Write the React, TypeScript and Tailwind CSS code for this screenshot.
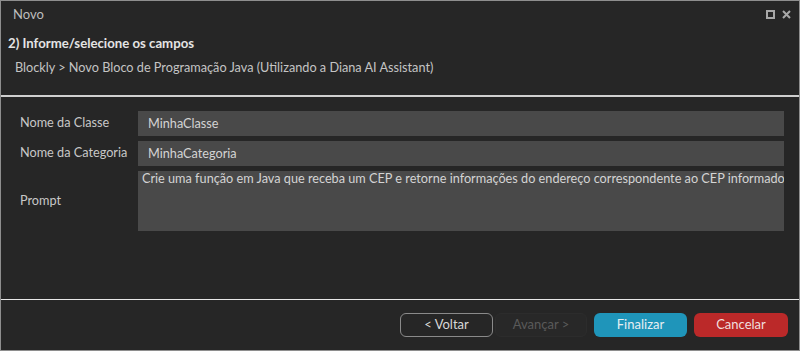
import React from "react";

const font = { fontFamily: "Lato, 'Noto Sans', sans-serif" };

export default function App() {
  return (
    <div
      className="w-[800px] h-[351px] border border-[#8e8e8e] bg-[#262626] flex flex-col text-[12.7px] text-[#cfcfcf] overflow-hidden"
      style={font}
    >
      {/* Title bar */}
      <div className="h-[27px] flex items-center justify-between pl-[12px] pr-[8px]">
        <span className="text-[13px] text-[#bdbdbd]">Novo</span>
        <div className="flex items-center gap-[7px]">
          <svg width="9" height="9" viewBox="0 0 9 9">
            <rect x="1" y="1" width="7" height="7" fill="none" stroke="#a8a8a8" strokeWidth="2" />
          </svg>
          <svg width="9" height="9" viewBox="0 0 9 9">
            <path d="M1 1 L8 8 M8 1 L1 8" stroke="#a8a8a8" strokeWidth="2" />
          </svg>
        </div>
      </div>

      {/* Header */}
      <div className="pl-[7px] pt-[6px] h-[67px]">
        <div className="font-bold text-[13.2px] text-[#e4e4e4] leading-[18px]">2) Informe/selecione os campos</div>
        <div className="pl-[7px] mt-[6px] text-[12.7px] text-[#c4c4c4] leading-[18px]">
          Blockly &gt; Novo Bloco de Programação Java (Utilizando a Diana AI Assistant)
        </div>
      </div>
      <div className="h-[2px] bg-[#cfcfcf]" />

      {/* Form */}
      <div className="flex-1 pt-[14px] pl-[19px] pr-[15px] flex flex-col gap-[5px]">
        <div className="flex items-center h-[25px]">
          <div className="w-[118px] shrink-0 -mt-[2px] text-[#c8c8c8]">Nome da Classe</div>
          <div className="flex-1 h-full bg-[#494949] flex items-center pl-[10px] text-[#d4d4d4]">MinhaClasse</div>
        </div>
        <div className="flex items-center h-[25px]">
          <div className="w-[118px] shrink-0 -mt-[2px] text-[#c8c8c8]">Nome da Categoria</div>
          <div className="flex-1 h-full bg-[#494949] flex items-center pl-[10px] text-[#d4d4d4]">MinhaCategoria</div>
        </div>
        <div className="flex items-center h-[60px]">
          <div className="w-[118px] shrink-0 text-[#c8c8c8]">Prompt</div>
          <div className="flex-1 h-full bg-[#494949] pl-[4px] text-[#d4d4d4] leading-[15px] whitespace-nowrap overflow-hidden">
            Crie uma função em Java que receba um CEP e retorne informações do endereço correspondente ao CEP informado
          </div>
        </div>
      </div>
      <div className="h-[1px] bg-[#e8e8e8]" />

      {/* Footer */}
      <div className="h-[50px] flex items-center justify-end pr-[11px]">
        <button className="w-[93px] h-[24px] mr-[2px] rounded-[6px] border border-[#8a8a8a] text-[#d8d8d8] text-[13px]" style={font}>
          &lt; Voltar
        </button>
        <button className="w-[92px] h-[24px] mr-[7px] rounded-[6px] border border-[#2c2c2c] bg-[#282828] text-[#5a5a5a] text-[13px]" style={font}>
          Avançar &gt;
        </button>
        <button className="w-[93px] h-[24px] mr-[7px] rounded-[6px] bg-[#1f95ba] text-[#e6eef2] text-[13px]" style={font}>
          Finalizar
        </button>
        <button className="w-[94px] h-[24px] rounded-[6px] bg-[#bb2929] text-[#f0dede] text-[13px]" style={font}>
          Cancelar
        </button>
      </div>
    </div>
  );
}
